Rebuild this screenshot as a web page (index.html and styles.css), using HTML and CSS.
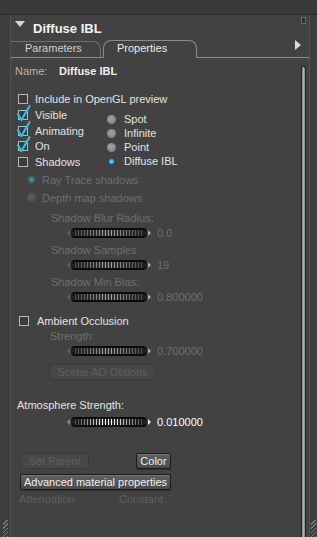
FILE: index.html
```html
<!DOCTYPE html>
<html lang="en">
  <head>
    <meta charset="UTF-8" />
    <title>Diffuse IBL</title>
    <link rel="stylesheet" href="styles.css">
  </head>
  <body>
    <div class="topbar"></div>
    <div class="main">
      <div class="gutter gutter-left"><div class="hatch"></div></div>

      <div class="panel">
        <div class="panel-head">
          <span class="collapse"></span>
          <span class="panel-title">Diffuse IBL</span>
          <span class="pin"></span>
        </div>

        <div class="tabs">
          <span class="tab tab-params">Parameters</span>
          <span class="tab tab-props">Properties</span>
          <span class="tab-more"></span>
        </div>

        <div class="panel-body">
          <div class="form">
            <div class="name-row">
              <span class="name-label">Name:</span>
              <span class="name-value">Diffuse IBL</span>
            </div>

            <div class="check-row first">
              <span class="cb"></span>Include in OpenGL preview
            </div>

            <div class="split">
              <div class="split-left">
                <div class="check-row"><span class="cb checked"><svg viewBox="0 0 16 16"><path d="M1 9.2 L4.4 15 L12.5 1.2"/></svg></span>Visible</div>
                <div class="check-row"><span class="cb checked"><svg viewBox="0 0 16 16"><path d="M1 9.2 L4.4 15 L12.5 1.2"/></svg></span>Animating</div>
                <div class="check-row"><span class="cb checked"><svg viewBox="0 0 16 16"><path d="M1 9.2 L4.4 15 L12.5 1.2"/></svg></span>On</div>
                <div class="check-row"><span class="cb"></span>Shadows</div>
              </div>
              <div class="split-right">
                <div class="radio-row"><span class="radio"></span>Spot</div>
                <div class="radio-row"><span class="radio"></span>Infinite</div>
                <div class="radio-row"><span class="radio"></span>Point</div>
                <div class="radio-row"><span class="radio on"></span>Diffuse IBL</div>
              </div>
            </div>

            <div class="shadow-type off">
              <div class="radio-row"><span class="radio on"></span>Ray Trace shadows</div>
              <div class="radio-row"><span class="radio"></span>Depth map shadows</div>
            </div>

            <div class="field off">
              <div class="field-label">Shadow Blur Radius:</div>
              <div class="slider"><span class="arrow-l"></span><span class="track"><span class="ridges"></span></span><span class="arrow-r"></span><span class="val">0.0</span></div>
            </div>
            <div class="field off">
              <div class="field-label">Shadow Samples</div>
              <div class="slider"><span class="arrow-l"></span><span class="track"><span class="ridges"></span></span><span class="arrow-r"></span><span class="val">19</span></div>
            </div>
            <div class="field off">
              <div class="field-label">Shadow Min Bias:</div>
              <div class="slider"><span class="arrow-l"></span><span class="track"><span class="ridges"></span></span><span class="arrow-r"></span><span class="val">0.800000</span></div>
            </div>

            <div class="check-row ao"><span class="cb"></span>Ambient Occlusion</div>
            <div class="field off ao-field">
              <div class="field-label">Strength:</div>
              <div class="slider"><span class="arrow-l"></span><span class="track"><span class="ridges"></span></span><span class="arrow-r"></span><span class="val">0.700000</span></div>
            </div>
            <div class="ao-btn-row">
              <span class="btn disabled btn-ao">Scene AO Options</span>
            </div>

            <div class="atmo">
              <div class="atmo-label">Atmosphere Strength:</div>
              <div class="slider"><span class="arrow-l"></span><span class="track"><span class="ridges"></span></span><span class="arrow-r"></span><span class="val">0.010000</span></div>
            </div>

            <div class="btn-row">
              <span class="btn disabled btn-parent">Set Parent</span>
              <span class="btn btn-color">Color</span>
            </div>
            <div class="btn-row adv">
              <span class="btn btn-adv">Advanced material properties</span>
            </div>
            <div class="atten-row">
              <span class="atten-label">Attenuation</span>
              <span>Constant</span>
            </div>
          </div>
          <div class="scrollbar"></div>
        </div>
      </div>

      <div class="gutter gutter-right"><div class="hatch"></div></div>
    </div>
  </body>
</html>
```

FILE: styles.css
```css
* {
  box-sizing: border-box;
}
body {
  margin: 0;
  width: 317px;
  height: 537px;
  overflow: hidden;
  background: #424242;
  font-family: "Liberation Sans", Arial, sans-serif;
  font-size: 11px;
  color: #e2e2e2;
}
.topbar {
  height: 15px;
  background: #393939;
  border-bottom: 1px solid #2b2b2b;
}
.main {
  display: flex;
  height: 522px;
}
.gutter {
  display: flex;
  flex-direction: column;
  justify-content: flex-end;
  background: #3d3d3d;
}
.gutter-left {
  width: 11px;
  border-right: 1px solid #535353;
}
.gutter-right {
  width: 8px;
  border-left: 1px solid #535353;
}
.hatch {
  height: 17px;
  margin: 0 2px 0 3px;
  background: repeating-linear-gradient(-45deg, #7a7a7a 0 1px, #3c3c3c 1px 3px);
}
.gutter-right .hatch {
  margin: 0 1px 0 1px;
}

/* panel */
.panel {
  flex: 1;
  display: flex;
  flex-direction: column;
  min-width: 0;
}
.panel-head {
  height: 25px;
  display: flex;
  align-items: center;
}
.collapse {
  align-self: flex-start;
  margin: 6px 0 0 4px;
  width: 0;
  height: 0;
  border-top: 6px solid #d6d6d6;
  border-left: 5px solid transparent;
  border-right: 5px solid transparent;
}
.panel-title {
  margin-left: 8px;
  margin-top: 2px;
  font-size: 13px;
  font-weight: bold;
  color: #f2f2f2;
}
.pin {
  align-self: flex-start;
  margin: 2px 3px 0 auto;
  width: 5px;
  height: 7px;
  border: 1px solid #6a6a6a;
  background: #2f2f2f;
}

/* tabs */
.tabs {
  height: 18px;
  display: flex;
  align-items: flex-end;
  border-bottom: 1px solid #8a8a8a;
}
.tab {
  display: block;
  line-height: 13px;
}
.tab-params {
  width: 90px;
  height: 16px;
  padding-left: 14px;
  color: #cfcfcf;
  border-top: 1px solid #6f6f6f;
  border-right: 1px solid #6f6f6f;
  border-top-right-radius: 8px;
}
.tab-props {
  width: 94px;
  height: 18px;
  margin: 0 0 -1px 2px;
  padding-left: 13px;
  line-height: 14px;
  color: #ececec;
  background: #424242;
  border: 1px solid #8a8a8a;
  border-bottom: 0;
  border-radius: 8px 8px 0 0;
}
.tab-more {
  align-self: flex-start;
  margin: 0 8px 0 auto;
  width: 0;
  height: 0;
  border-left: 6px solid #dcdcdc;
  border-top: 5.5px solid transparent;
  border-bottom: 5.5px solid transparent;
}

.panel-body {
  flex: 1;
  display: flex;
  min-height: 0;
}
.form {
  flex: 1;
  padding-top: 6px;
}
.scrollbar {
  width: 5px;
  margin: 8px 3px 0 0;
  border: 1px solid #262626;
  border-bottom: 0;
  border-radius: 3px 3px 0 0;
  background: linear-gradient(90deg, #7c7c7c, #b4b4b4, #7c7c7c);
}

/* name */
.name-row {
  height: 14px;
  line-height: 14px;
  padding-left: 4px;
}
.name-label {
  display: inline-block;
  width: 41px;
  color: #b4b4b4;
}
.name-value {
  font-weight: bold;
  color: #f0f0f0;
}

/* checkboxes */
.check-row {
  display: flex;
  align-items: center;
  height: 15.75px;
  gap: 7px;
  padding-left: 7px;
}
.check-row.first {
  margin-top: 13.2px;
}
.cb {
  position: relative;
  flex: none;
  width: 10px;
  height: 10px;
  border: 1px solid #b6b6b6;
  background: #3b3b3b;
}
.cb svg {
  position: absolute;
  left: -2px;
  top: -6px;
  width: 16px;
  height: 16px;
  overflow: visible;
  fill: none;
  stroke: #1fc6ee;
  stroke-width: 2.2;
  stroke-linecap: round;
  stroke-linejoin: round;
}

.split {
  display: flex;
}
.split-left {
  width: 96px;
}
.split-right {
  padding-top: 5.5px;
}
.radio-row {
  display: flex;
  align-items: center;
  height: 14px;
  gap: 8px;
}
.radio {
  flex: none;
  width: 9px;
  height: 9px;
  border-radius: 50%;
  background: radial-gradient(circle at 45% 40%, #a4a4a4, #767676);
}
.radio.on {
  background: radial-gradient(circle closest-side, #6ee2ff 0, #22a8d8 45%, #1d6f8c 62%, #33474b 75%, #2e3a3c 100%);
}

/* shadows */
.off {
  color: #6e6e6e;
}
.shadow-type {
  margin-top: 3px;
  padding-left: 16px;
}
.shadow-type .radio-row {
  gap: 6px;
}
.shadow-type .radio-row + .radio-row {
  margin-top: 3.7px;
}
.off .radio {
  background: radial-gradient(circle at 45% 40%, #5a5a5a, #4c4c4c);
}
.off .radio.on {
  background: radial-gradient(circle closest-side, #4f97b8 0, #3f7c97 45%, #3f5962 65%, #4a4f50 80%, #4a4a4a 100%);
}

.field {
  margin-bottom: 2px;
}
.shadow-type + .field {
  margin-top: 6px;
}
.field-label {
  height: 14px;
  line-height: 14px;
  padding-left: 40px;
}

/* sliders */
.slider {
  display: flex;
  align-items: center;
  height: 16px;
  padding-left: 56px;
}
.arrow-l {
  width: 0;
  height: 0;
  margin-right: 1px;
  border-right: 3px solid #8a8a8a;
  border-top: 3px solid transparent;
  border-bottom: 3px solid transparent;
}
.arrow-r {
  width: 0;
  height: 0;
  margin-left: 1px;
  border-left: 3px solid #e6e6e6;
  border-top: 3px solid transparent;
  border-bottom: 3px solid transparent;
}
.track {
  display: block;
  width: 76px;
  height: 10px;
  padding: 2px 4px;
  border-radius: 4px;
  background: linear-gradient(#050505, #262626 50%, #050505);
}
.ridges {
  display: block;
  height: 100%;
  background:
    linear-gradient(90deg, rgba(18, 18, 18, 0.75), rgba(18, 18, 18, 0) 42%, rgba(18, 18, 18, 0) 58%, rgba(18, 18, 18, 0.75)),
    repeating-linear-gradient(90deg, #f4f4f4 0 1.5px, #2e2e2e 1.5px 3px);
}
.off .ridges {
  background:
    linear-gradient(90deg, rgba(30, 30, 30, 0.7), rgba(30, 30, 30, 0.05) 45%, rgba(30, 30, 30, 0.05) 55%, rgba(30, 30, 30, 0.7)),
    repeating-linear-gradient(90deg, #a8a8a8 0 1.5px, #303030 1.5px 3px);
}
.off .arrow-l {
  border-right-color: #5e5e5e;
}
.off .arrow-r {
  border-left-color: #a8a8a8;
}
.val {
  margin-left: 6px;
}
.atmo .val {
  color: #ffffff;
}

/* ambient occlusion */
.check-row.ao {
  margin-top: 9.3px;
  margin-bottom: 1px;
  height: 14px;
  padding-left: 8px;
  gap: 8px;
}
.ao-field .field-label {
  padding-left: 39px;
}
.ao-btn-row {
  margin-top: 5px;
  padding-left: 38px;
}

/* buttons */
.btn {
  display: inline-block;
  height: 16px;
  line-height: 14px;
  text-align: center;
  color: #f0f0f0;
  border: 1px solid #1c1c1c;
  border-radius: 2px;
  background: linear-gradient(#606060, #4a4a4a);
  box-shadow: inset 0 1px 0 rgba(255, 255, 255, 0.14), 0 1px 1px rgba(0, 0, 0, 0.3);
}
.btn.disabled {
  color: #5f5f5f;
  border-color: #3a3a3a;
  background: #474747;
  box-shadow: none;
}
.btn-ao {
  width: 107px;
}
.atmo {
  margin-top: 17.7px;
}
.atmo-label {
  height: 14px;
  line-height: 14px;
  padding-left: 6px;
}
.atmo .slider {
  margin-top: 2.3px;
}
.btn-row {
  display: flex;
  align-items: center;
  margin-top: 23px;
  padding-left: 9px;
}
.btn-parent {
  width: 69px;
}
.btn-color {
  width: 35px;
  margin-left: 47px;
}
.btn-row.adv {
  margin-top: 5px;
}
.btn-adv {
  width: 151px;
}
.atten-row {
  margin-top: 2px;
  height: 14px;
  line-height: 14px;
  padding-left: 8px;
  color: #5f5f5f;
}
.atten-label {
  display: inline-block;
  width: 97px;
}
```
